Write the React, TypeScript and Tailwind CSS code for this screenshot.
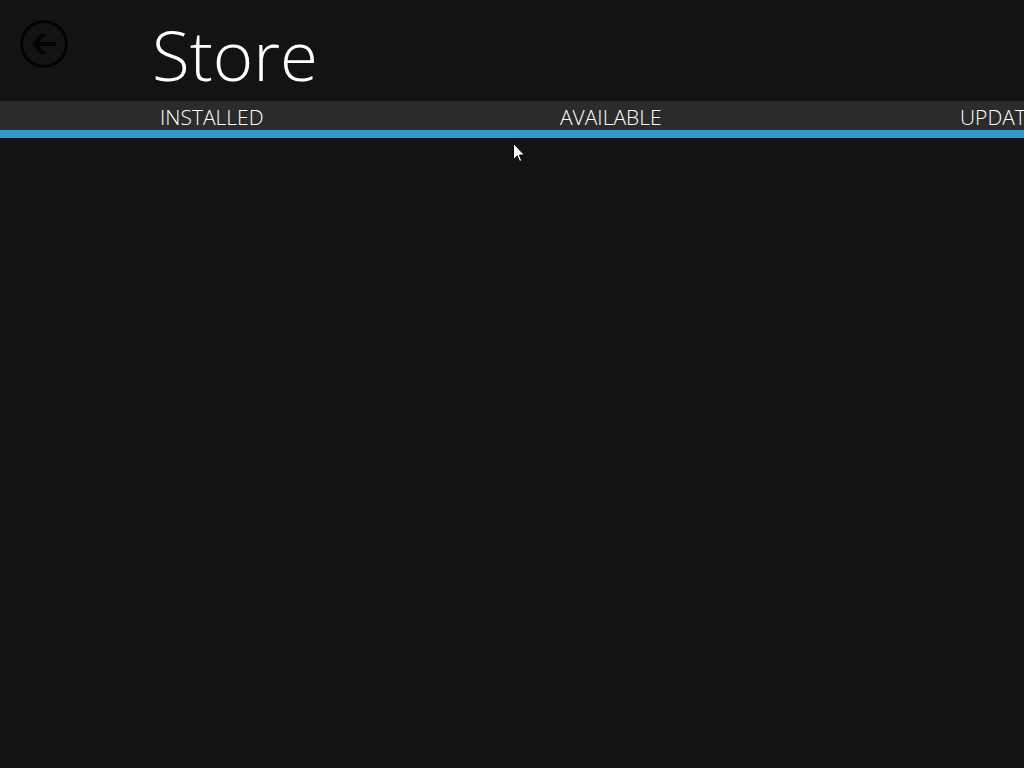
const TABS = ['INSTALLED', 'AVAILABLE', 'UPDATES'];

export default function App() {
  return (
    <div className="relative min-h-screen overflow-hidden bg-[#131313] font-['Open_Sans','Noto_Sans',sans-serif] font-light text-white">
      <header className="flex h-[101px] items-start">
        <div className="w-[152px] shrink-0 pt-5 pl-5">
          <button type="button" aria-label="Back" className="block">
            <BackIcon />
          </button>
        </div>
        <h1 className="pt-1 text-[69px] leading-[101px] font-[350]">Store</h1>
      </header>

      <nav className="flex h-[37px] overflow-hidden border-b-8 border-[#3399cc] bg-[#2b2b2b] pl-40">
        {TABS.map((tab) => (
          <button
            key={tab}
            type="button"
            className="w-[400px] shrink-0 pt-0.5 text-left text-[21px] leading-6"
          >
            {tab}
          </button>
        ))}
      </nav>

      <main />

      <Cursor />
    </div>
  );
}

function BackIcon() {
  return (
    <svg width="48" height="48" viewBox="0 0 48 48" fill="none" stroke="#020202">
      <circle cx="24" cy="24" r="22.4" strokeWidth="2.8" />
      <path d="M36 24H15" strokeWidth="4" />
      <path d="M26 14h-5l-9 10 9 10h5l-9-10z" fill="#020202" stroke="none" />
    </svg>
  );
}

function Cursor() {
  return (
    <svg
      className="pointer-events-none absolute top-[143px] left-[513px]"
      width="12"
      height="19"
      viewBox="0 0 12 19"
    >
      <path
        d="M.5.5v16l3.7-3.6 2.4 5.6 2.2-.9-2.4-5.5h5.1z"
        fill="#fff"
        stroke="#000"
        strokeWidth="1"
      />
    </svg>
  );
}
